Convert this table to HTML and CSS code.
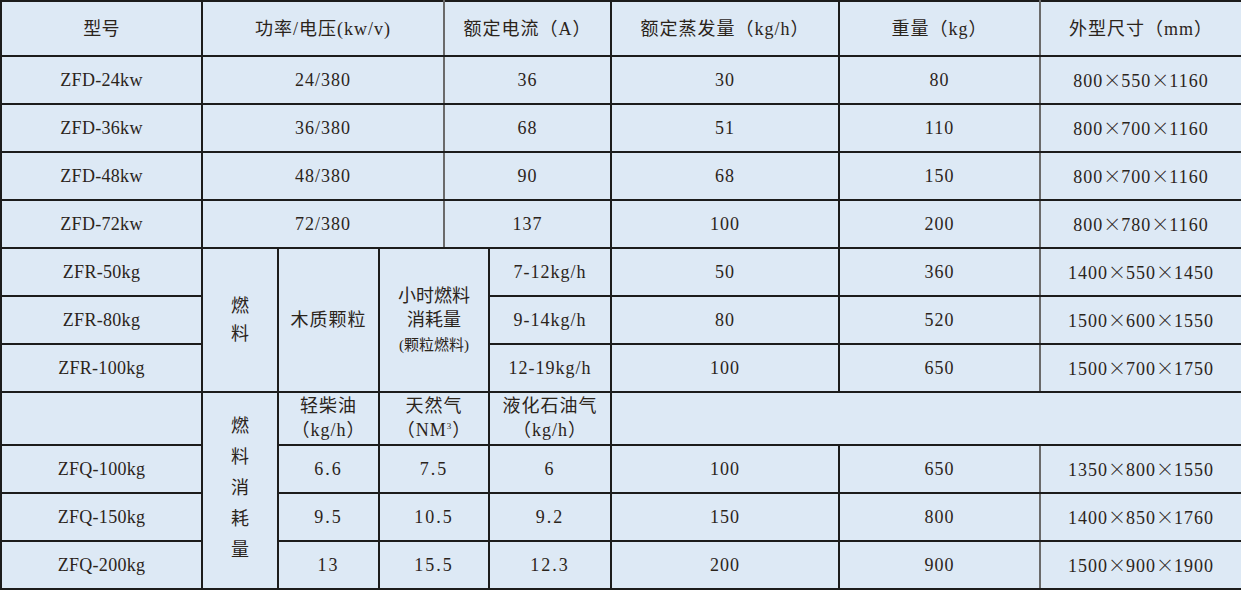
FILE: index.html
```html
<!DOCTYPE html>
<html lang="zh-CN">
<head>
<meta charset="utf-8">
<title>参数表</title>
<link rel="stylesheet" href="styles.css">
</head>
<body>
<table class="spec">
  <colgroup>
    <col class="c1"><col class="c2"><col class="c3"><col class="c4"><col class="c5"><col class="c6"><col class="c7"><col class="c8"><col class="c9">
  </colgroup>
  <tbody>
    <tr class="head">
      <td class="model">型号</td>
      <td colspan="3" class="gr">功率/电压(kw/v)</td>
      <td colspan="2">额定电流（A）</td>
      <td>额定蒸发量（kg/h）</td>
      <td class="gr">重量（kg）</td>
      <td>外型尺寸（mm）</td>
    </tr>
    <tr><td class="model">ZFD-24kw</td><td colspan="3" class="gr">24/380</td><td colspan="2">36</td><td>30</td><td class="gr">80</td><td>800<span class="x">×</span>550<span class="x">×</span>1160</td></tr>
    <tr><td class="model">ZFD-36kw</td><td colspan="3" class="gr">36/380</td><td colspan="2">68</td><td>51</td><td class="gr">110</td><td>800<span class="x">×</span>700<span class="x">×</span>1160</td></tr>
    <tr><td class="model">ZFD-48kw</td><td colspan="3" class="gr">48/380</td><td colspan="2">90</td><td>68</td><td class="gr">150</td><td>800<span class="x">×</span>700<span class="x">×</span>1160</td></tr>
    <tr><td class="model">ZFD-72kw</td><td colspan="3" class="gr">72/380</td><td colspan="2">137</td><td>100</td><td class="gr">200</td><td>800<span class="x">×</span>780<span class="x">×</span>1160</td></tr>
    <tr>
      <td class="model">ZFR-50kg</td>
      <td rowspan="3" class="vert">燃<br>料</td>
      <td rowspan="3">木质颗粒</td>
      <td rowspan="3" colspan="2" class="hourly">小时燃料<br>消耗量<br><span class="small">(颗粒燃料)</span></td>
      <td>7-12kg/h</td><td>50</td><td class="gr">360</td><td>1400<span class="x">×</span>550<span class="x">×</span>1450</td>
    </tr>
    <tr><td class="model">ZFR-80kg</td><td>9-14kg/h</td><td>80</td><td class="gr">520</td><td>1500<span class="x">×</span>600<span class="x">×</span>1550</td></tr>
    <tr><td class="model">ZFR-100kg</td><td>12-19kg/h</td><td>100</td><td class="gr">650</td><td>1500<span class="x">×</span>700<span class="x">×</span>1750</td></tr>
    <tr class="fuelhead">
      <td class="model"></td>
      <td rowspan="4" class="vert tall">燃<br>料<br>消<br>耗<br>量</td>
      <td class="two">轻柴油<br>（kg/h）</td>
      <td colspan="2" class="two">天然气<br>（NM<sup>3</sup>）</td>
      <td class="two">液化石油气<br>（kg/h）</td>
      <td colspan="3"></td>
    </tr>
    <tr><td class="model">ZFQ-100kg</td><td class="dec">6.6</td><td colspan="2" class="dec">7.5</td><td class="dec">6</td><td>100</td><td class="gr">650</td><td>1350<span class="x">×</span>800<span class="x">×</span>1550</td></tr>
    <tr><td class="model">ZFQ-150kg</td><td class="dec">9.5</td><td colspan="2" class="dec">10.5</td><td class="dec">9.2</td><td>150</td><td class="gr">800</td><td>1400<span class="x">×</span>850<span class="x">×</span>1760</td></tr>
    <tr><td class="model">ZFQ-200kg</td><td class="dec">13</td><td colspan="2" class="dec">15.5</td><td class="dec">12.3</td><td>200</td><td class="gr">900</td><td>1500<span class="x">×</span>900<span class="x">×</span>1900</td></tr>
  </tbody>
</table>
</body>
</html>
```

FILE: styles.css
```css
html, body {
  margin: 0;
  padding: 0;
  background: #ffffff;
}

.spec {
  border-collapse: collapse;
  table-layout: fixed;
  width: 1241px;
  background: #dde9f5;
  font-family: "Liberation Serif", "Noto Sans CJK SC", serif;
  font-size: 18px;
  letter-spacing: 1px;
  color: #2b241b;
  border: 2px solid #6e6e6e;
}

.c1 { width: 201px; }
.c2 { width: 76px; }
.c3 { width: 101px; }
.c4 { width: 65px; }
.c5 { width: 45px; }
.c6 { width: 122px; }
.c7 { width: 228px; }
.c8 { width: 201px; }
.c9 { width: 202px; }

.spec td {
  border: 2px solid #1c1c1c;
  text-align: center;
  vertical-align: middle;
  padding: 0;
  height: 46px;
  line-height: 22px;
}

.spec td.model {
  letter-spacing: 0.3px;
}

.spec td.dec {
  letter-spacing: 2px;
}

.spec td.gr {
  border-right-color: #6a6a6a;
}

.spec tr.head td {
  height: 53px;
}

.spec tr.fuelhead td {
  height: 49px;
}

.spec td.two {
  line-height: 24px;
  padding-bottom: 2px;
}

.spec td.vert {
  line-height: 28px;
  letter-spacing: 0;
}

.spec td.vert.tall {
  line-height: 31px;
  padding-bottom: 4px;
}

.spec td.hourly {
  line-height: 24px;
  letter-spacing: 0;
}

.x {
  font-family: "Noto Sans CJK SC", sans-serif;
  font-weight: 300;
  letter-spacing: 0;
}

.small {
  font-size: 15px;
}

sup {
  font-size: 9px;
  line-height: 0;
  vertical-align: 7px;
}
```
